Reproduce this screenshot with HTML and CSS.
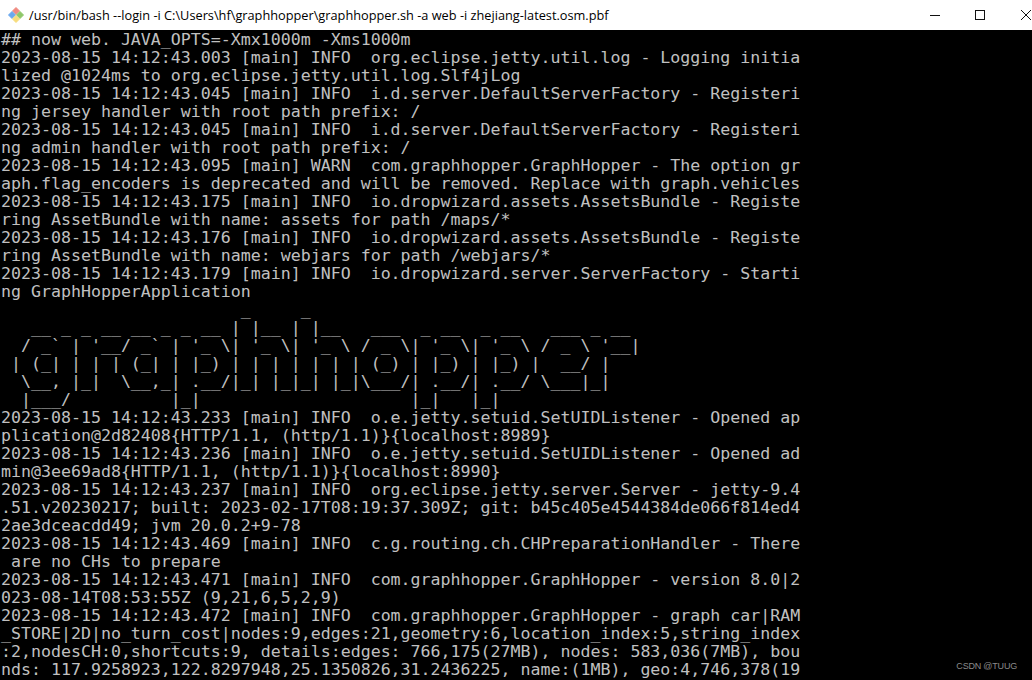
FILE: index.html
```html
<!DOCTYPE html>
<html lang="en">
<head>
<meta charset="utf-8">
<title>Terminal</title>
<link rel="stylesheet" href="styles.css">
</head>
<body>
<div class="window">
  <header class="titlebar">
    <svg class="app-icon" width="16" height="16" viewBox="0 0 16 16">
      <path d="M8 0.5 L11.5 4 L8 7.5 L4.5 4 Z" fill="#f08a80" stroke="#f08a80" stroke-linejoin="round"/>
      <path d="M0.5 8 L4 4.5 L7.5 8 L4 11.5 Z" fill="#6aa8ee" stroke="#6aa8ee" stroke-linejoin="round"/>
      <path d="M15.5 8 L12 4.5 L8.5 8 L12 11.5 Z" fill="#8ec76a" stroke="#8ec76a" stroke-linejoin="round"/>
      <path d="M8 15.5 L11.5 12 L8 8.5 L4.5 12 Z" fill="#f7dc7c" stroke="#f7dc7c" stroke-linejoin="round"/>
    </svg>
    <span class="title">/usr/bin/bash --login -i C:\Users\hf\graphhopper\graphhopper.sh -a web -i zhejiang-latest.osm.pbf</span>
    <div class="controls">
      <svg class="ctl" width="10" height="10" viewBox="0 0 10 10"><path d="M0 5.5H10" stroke="#111" fill="none"/></svg>
      <svg class="ctl" width="10" height="10" viewBox="0 0 10 10"><rect x="0.5" y="0.5" width="9" height="9" stroke="#111" fill="none"/></svg>
      <svg class="ctl ctl-close" width="10" height="10" viewBox="0 0 10 10"><path d="M0 0L10 10M10 0L0 10" stroke="#111" fill="none"/></svg>
    </div>
  </header>
  <pre class="console">## now web. JAVA_OPTS=-Xmx1000m -Xms1000m
2023-08-15 14:12:43.003 [main] INFO  org.eclipse.jetty.util.log - Logging initia
lized @1024ms to org.eclipse.jetty.util.log.Slf4jLog
2023-08-15 14:12:43.045 [main] INFO  i.d.server.DefaultServerFactory - Registeri
ng jersey handler with root path prefix: /
2023-08-15 14:12:43.045 [main] INFO  i.d.server.DefaultServerFactory - Registeri
ng admin handler with root path prefix: /
2023-08-15 14:12:43.095 [main] WARN  com.graphhopper.GraphHopper - The option gr
aph.flag_encoders is deprecated and will be removed. Replace with graph.vehicles
2023-08-15 14:12:43.175 [main] INFO  io.dropwizard.assets.AssetsBundle - Registe
ring AssetBundle with name: assets for path /maps/*
2023-08-15 14:12:43.176 [main] INFO  io.dropwizard.assets.AssetsBundle - Registe
ring AssetBundle with name: webjars for path /webjars/*
2023-08-15 14:12:43.179 [main] INFO  io.dropwizard.server.ServerFactory - Starti
ng GraphHopperApplication
                        _     _
   __ _ _ __ __ _ _ __ | |__ | |__   ___  _ __  _ __   ___ _ __
  / _` | '__/ _` | '_ \| '_ \| '_ \ / _ \| '_ \| '_ \ / _ \ '__|
 | (_| | | | (_| | |_) | | | | | | | (_) | |_) | |_) |  __/ |
  \__, |_|  \__,_| .__/|_| |_|_| |_|\___/| .__/| .__/ \___|_|
  |___/          |_|                     |_|   |_|
2023-08-15 14:12:43.233 [main] INFO  o.e.jetty.setuid.SetUIDListener - Opened ap
plication@2d82408{HTTP/1.1, (http/1.1)}{localhost:8989}
2023-08-15 14:12:43.236 [main] INFO  o.e.jetty.setuid.SetUIDListener - Opened ad
min@3ee69ad8{HTTP/1.1, (http/1.1)}{localhost:8990}
2023-08-15 14:12:43.237 [main] INFO  org.eclipse.jetty.server.Server - jetty-9.4
.51.v20230217; built: 2023-02-17T08:19:37.309Z; git: b45c405e4544384de066f814ed4
2ae3dceacdd49; jvm 20.0.2+9-78
2023-08-15 14:12:43.469 [main] INFO  c.g.routing.ch.CHPreparationHandler - There
 are no CHs to prepare
2023-08-15 14:12:43.471 [main] INFO  com.graphhopper.GraphHopper - version 8.0|2
023-08-14T08:53:55Z (9,21,6,5,2,9)
2023-08-15 14:12:43.472 [main] INFO  com.graphhopper.GraphHopper - graph car|RAM
_STORE|2D|no_turn_cost|nodes:9,edges:21,geometry:6,location_index:5,string_index
:2,nodesCH:0,shortcuts:9, details:edges: 766,175(27MB), nodes: 583,036(7MB), bou
nds: 117.9258923,122.8297948,25.1350826,31.2436225, name:(1MB), geo:4,746,378(19</pre>
  <span class="watermark">CSDN @TUUG</span>
</div>
</body>
</html>
```
FILE: styles.css
```css
html, body {
  margin: 0;
  padding: 0;
  background: #000;
}
.window {
  position: relative;
  width: 1032px;
  height: 680px;
  overflow: hidden;
  display: flex;
  flex-direction: column;
  background: #000;
}
.titlebar {
  flex: none;
  height: 30px;
  background: #fff;
  display: flex;
  align-items: center;
  padding-left: 8px;
  box-sizing: border-box;
}
.app-icon {
  flex: none;
  margin-right: 5px;
}
.title {
  font-family: "Open Sans", "Noto Sans", sans-serif;
  font-size: 12.75px;
  color: #000;
  white-space: nowrap;
}
.controls {
  margin-left: auto;
  display: flex;
  align-items: center;
  gap: 35px;
  padding-right: 1px;
}
.ctl {
  display: block;
}
.ctl-close {
  margin-left: 1px;
}
.console {
  flex: 1;
  margin: 0;
  padding: 1px 0 0 1px;
  background: #000;
  color: #c0c0c0;
  font-family: "DejaVu Sans Mono", monospace;
  font-size: 16.6px;
  line-height: 18px;
  white-space: pre;
  overflow: hidden;
}
.watermark {
  position: absolute;
  right: 15px;
  bottom: 9px;
  font-family: "Liberation Sans", sans-serif;
  font-size: 9px;
  letter-spacing: -0.2px;
  color: #8a8a8a;
}
```
